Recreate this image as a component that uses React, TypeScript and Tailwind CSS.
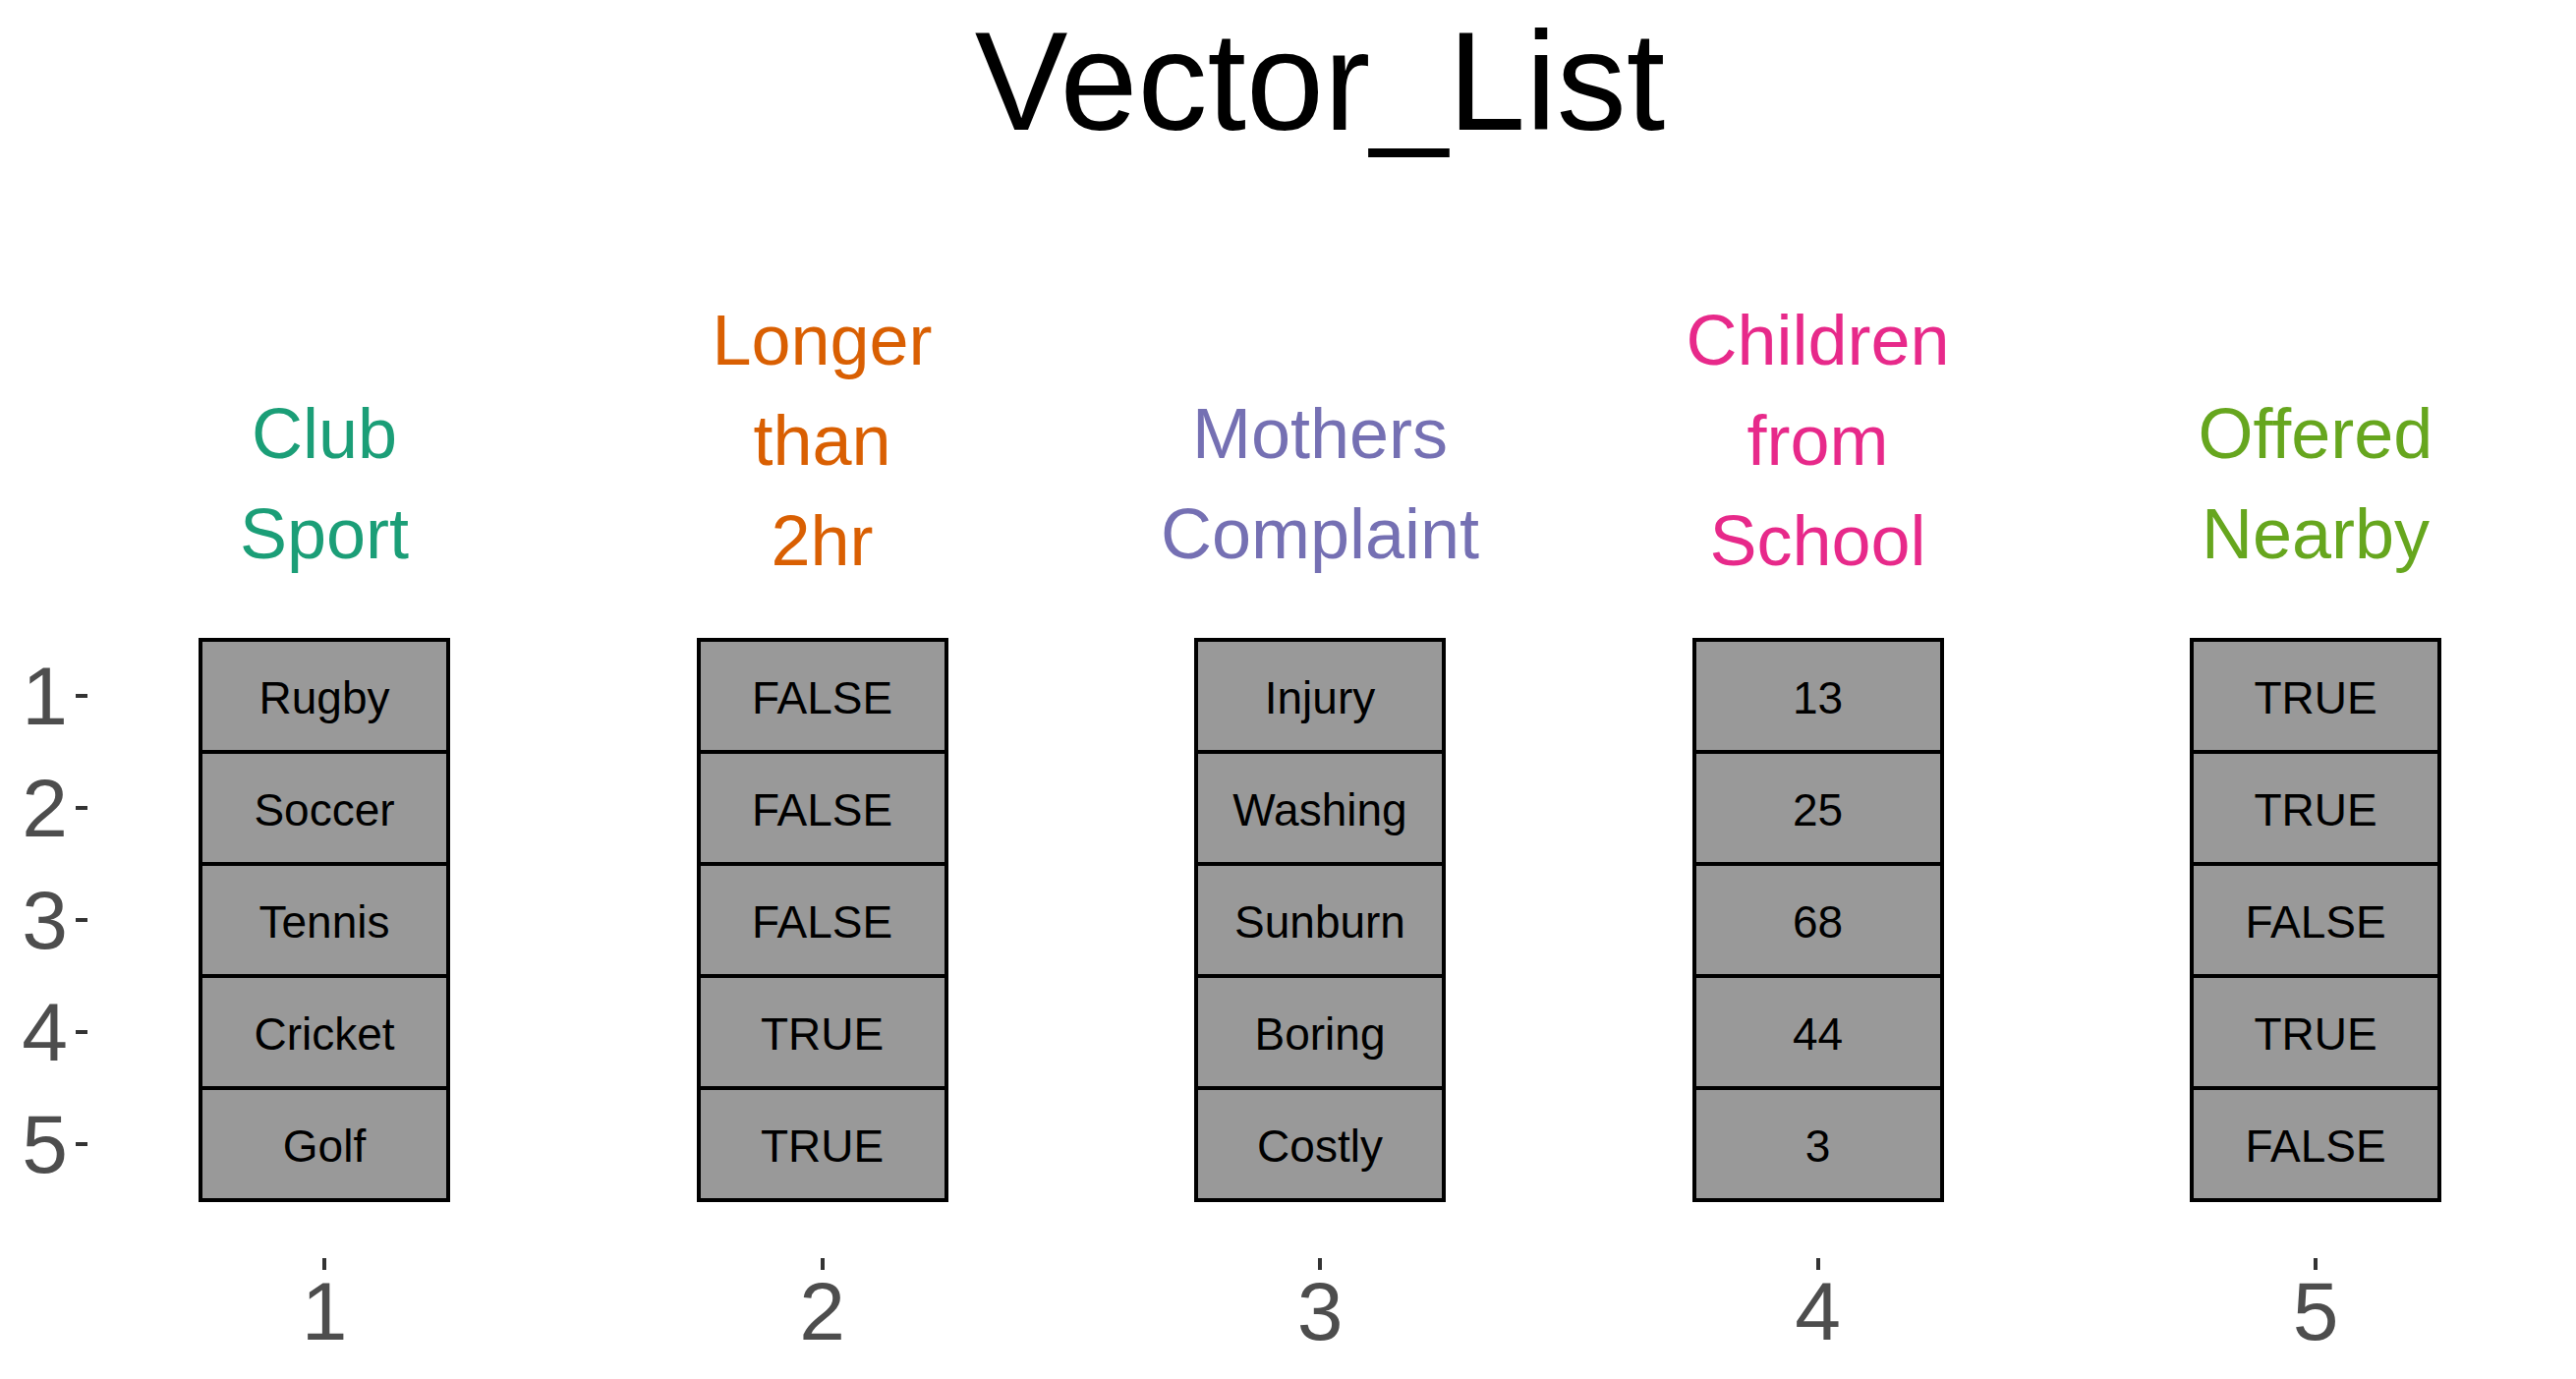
const font = "font-['Liberation_Sans',Arial,sans-serif]";

type Column = { label: string[]; color: string; values: string[] };

const columns: Column[] = [
  { label: ['Club', 'Sport'], color: 'text-[#1B9E77]', values: ['Rugby', 'Soccer', 'Tennis', 'Cricket', 'Golf'] },
  { label: ['Longer', 'than', '2hr'], color: 'text-[#D95F02]', values: ['FALSE', 'FALSE', 'FALSE', 'TRUE', 'TRUE'] },
  { label: ['Mothers', 'Complaint'], color: 'text-[#7570B3]', values: ['Injury', 'Washing', 'Sunburn', 'Boring', 'Costly'] },
  { label: ['Children', 'from', 'School'], color: 'text-[#E7298A]', values: ['13', '25', '68', '44', '3'] },
  { label: ['Offered', 'Nearby'], color: 'text-[#66A61E]', values: ['TRUE', 'TRUE', 'FALSE', 'TRUE', 'FALSE'] },
];

function Header({ col }: { col: Column }) {
  // 2-line labels sit a little higher than the 3-line ones
  return (
    <div className={`w-[256px] h-[447px] flex flex-col items-center justify-end ${col.label.length === 2 ? 'pb-[7px]' : ''}`}>
      {col.label.map((l, i) => (
        <div key={i} className={`whitespace-nowrap text-[72px] leading-[102px] ${col.color}`}>{l}</div>
      ))}
    </div>
  );
}

function Stack({ values }: { values: string[] }) {
  return (
    <div className="w-[256px] border-[4px] border-black bg-[#999999] flex flex-col">
      {values.map((v, i) => (
        <div
          key={i}
          className={`flex items-center justify-center pt-[4px] text-[46px] leading-none text-black ${i > 0 ? 'h-[114px] border-t-[4px] border-black' : 'h-[110px]'}`}
        >
          {v}
        </div>
      ))}
    </div>
  );
}

export default function App() {
  return (
    <div className={`w-[2621px] h-[1403px] bg-white overflow-hidden pt-[12px] ${font}`}>
      {/* title over the panel */}
      <div className="ml-[89px] w-[2508px] text-center text-[142px] leading-none h-[142px] text-black">Vector_List</div>

      {/* strip labels */}
      <div className="flex pl-[202px] gap-[250.5px]">
        {columns.map((c, i) => <Header key={i} col={c} />)}
      </div>

      {/* y axis + stacks */}
      <div className="flex mt-[48px]">
        <div className="w-[89px] flex flex-col pt-[4px] gap-[4px]">
          {[1, 2, 3, 4, 5].map(n => (
            <div key={n} className="h-[110px] flex items-center justify-end">
              <span className="text-[84px] leading-none text-[#4D4D4D]">{n}</span>
              <span className="ml-[8px] w-[12px] h-[4px] bg-[#333333]" />
            </div>
          ))}
        </div>
        <div className="ml-[113px] flex gap-[250.5px]">
          {columns.map((c, i) => <Stack key={i} values={c.values} />)}
        </div>
      </div>

      {/* x axis */}
      <div className="flex pl-[202px] gap-[250.5px] mt-[57px]">
        {columns.map((_, i) => (
          <div key={i} className="w-[256px] flex flex-col items-center">
            <div className="w-[4px] h-[12px] bg-[#333333]" />
            <div className="text-[84px] leading-none text-[#4D4D4D]">{i + 1}</div>
          </div>
        ))}
      </div>
    </div>
  );
}
